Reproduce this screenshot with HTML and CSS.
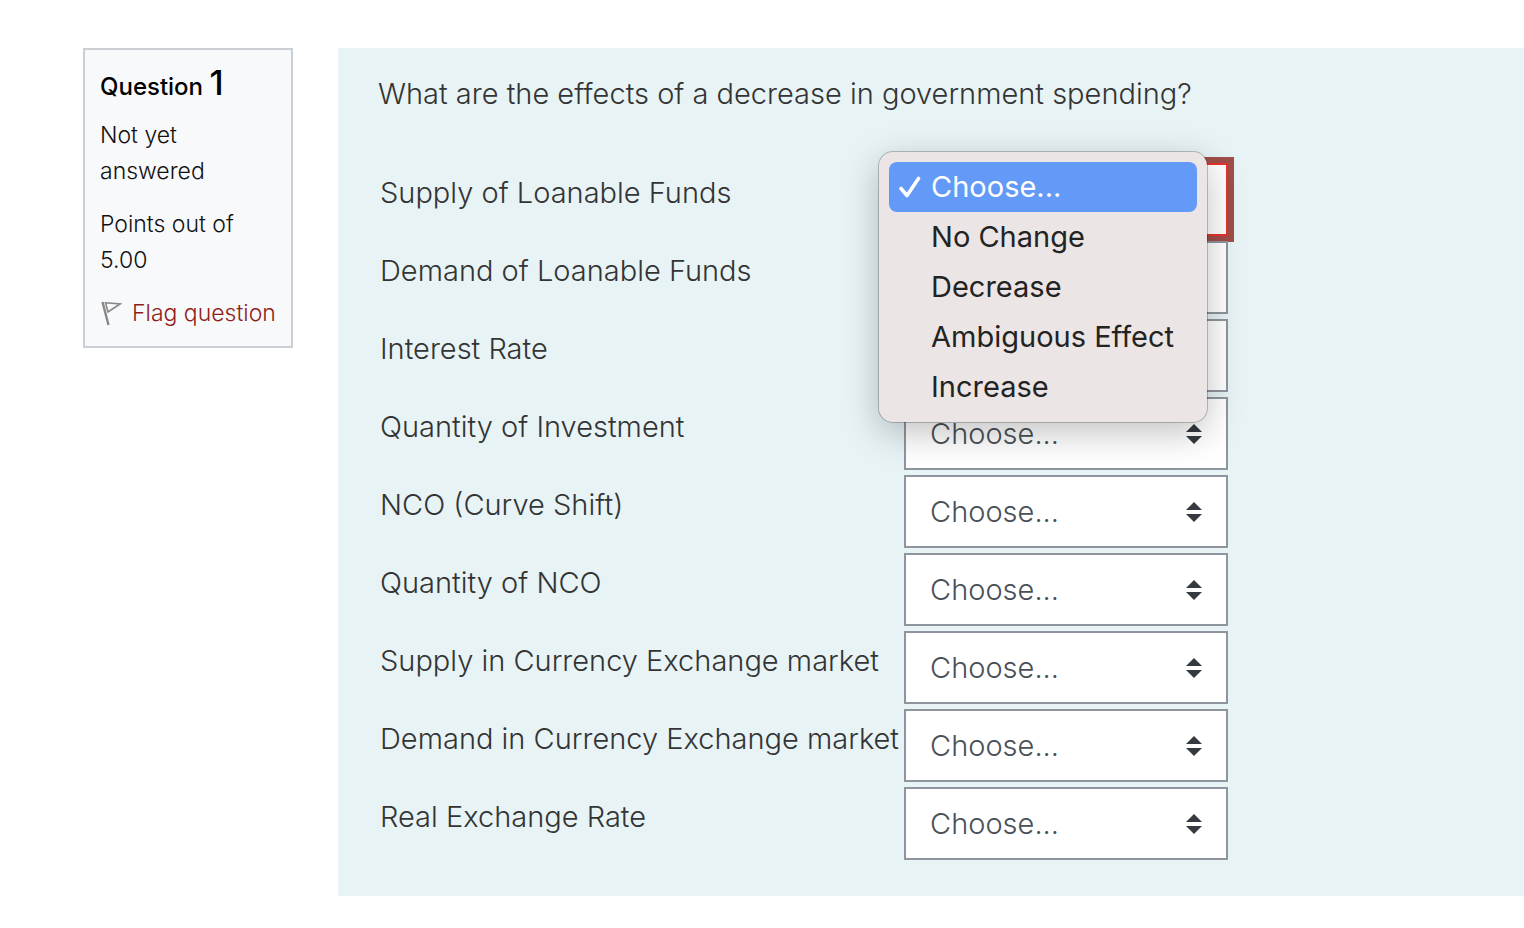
FILE: index.html
```html
<!DOCTYPE html>
<html lang="en">
<head>
    <meta charset="UTF-8">
    <meta name="viewport" content="width=device-width, initial-scale=1.0">
    <title>Question 1</title>
    <link rel="stylesheet" href="styles.css">
</head>
<body>
    <main class="question">
        <aside class="info">
            <h3 class="number">Question <span class="qno">1</span></h3>
            <div class="state">Not yet answered</div>
            <div class="grade">Points out of 5.00</div>
            <a class="flag" href="#">
                <svg width="22" height="26" viewBox="0 0 22 26" fill="none" stroke="#888">
                    <path d="M2.5 2L8.5 25" stroke-width="2.4"/>
                    <path d="M5.5 2.8L20 4L8 12Z" stroke-width="1.6"/>
                </svg>
                <span>Flag question</span>
            </a>
        </aside>

        <section class="content">
            <p class="qtext">What are the effects of a decrease in government spending?</p>

            <table class="answer">
                <tbody>
                    <tr>
                        <td class="text"><label for="sub0">Supply of Loanable Funds</label></td>
                        <td class="control">
                            <select id="sub0" class="select open"><option>Choose...</option></select>
                            <ul class="menu" role="listbox" aria-label="Supply of Loanable Funds">
                                <li class="item selected" role="option" aria-selected="true">
                                    <svg class="check" width="22" height="22" viewBox="0 0 22 22" fill="none" stroke="#fff" stroke-width="3.6" stroke-linecap="round" stroke-linejoin="round">
                                        <path d="M2 12.5L8 19.5L19.5 2.5"/>
                                    </svg>
                                    Choose...
                                </li>
                                <li class="item" role="option">No Change</li>
                                <li class="item" role="option">Decrease</li>
                                <li class="item" role="option">Ambiguous Effect</li>
                                <li class="item" role="option">Increase</li>
                            </ul>
                        </td>
                    </tr>
                    <tr>
                        <td class="text"><label for="sub1">Demand of Loanable Funds</label></td>
                        <td class="control"><select id="sub1" class="select"><option>Choose...</option></select></td>
                    </tr>
                    <tr>
                        <td class="text"><label for="sub2">Interest Rate</label></td>
                        <td class="control"><select id="sub2" class="select"><option>Choose...</option></select></td>
                    </tr>
                    <tr>
                        <td class="text"><label for="sub3">Quantity of Investment</label></td>
                        <td class="control"><select id="sub3" class="select"><option>Choose...</option></select></td>
                    </tr>
                    <tr>
                        <td class="text"><label for="sub4">NCO (Curve Shift)</label></td>
                        <td class="control"><select id="sub4" class="select"><option>Choose...</option></select></td>
                    </tr>
                    <tr>
                        <td class="text"><label for="sub5">Quantity of NCO</label></td>
                        <td class="control"><select id="sub5" class="select"><option>Choose...</option></select></td>
                    </tr>
                    <tr>
                        <td class="text"><label for="sub6">Supply in Currency Exchange market</label></td>
                        <td class="control"><select id="sub6" class="select"><option>Choose...</option></select></td>
                    </tr>
                    <tr>
                        <td class="text"><label for="sub7">Demand in Currency Exchange market</label></td>
                        <td class="control"><select id="sub7" class="select"><option>Choose...</option></select></td>
                    </tr>
                    <tr>
                        <td class="text"><label for="sub8">Real Exchange Rate</label></td>
                        <td class="control"><select id="sub8" class="select"><option>Choose...</option></select></td>
                    </tr>
                </tbody>
            </table>
        </section>
    </main>
</body>
</html>
```
FILE: styles.css
```css
* {
    box-sizing: border-box;
}

body {
    margin: 0;
    background-color: #fff;
    color: #343434;
    font-family: Inter, sans-serif;
    font-size: 29px;
    font-weight: 300;
    line-height: 45px;
}

.question {
    display: flex;
    align-items: flex-start;
    gap: 45px;
    padding: 48px 0 32px 83px;
}

/* Left info box */
.info {
    flex: 0 0 210px;
    padding: 15px;
    border: 2px solid #cacfd6;
    background-color: #f8f9fb;
    color: #111;
    font-size: 23px;
    line-height: 36px;
}

.number {
    margin: 0 0 12px;
    color: #000;
    font-size: 24px;
    font-weight: 500;
}

.qno {
    font-size: 34px;
}

.grade, .flag {
    margin-top: 17px;
}

.flag {
    display: flex;
    align-items: center;
    gap: 10px;
    color: #8f1d18;
    text-decoration: none;
    white-space: nowrap;
}

/* Question body */
.content {
    flex: 1;
    padding: 23px 40px 33px;
    background-color: #e7f3f5;
}

.qtext {
    margin: 0 0 45px;
}

.answer {
    border-collapse: collapse;
}

.answer td {
    padding: 2px 0 3px;
    vertical-align: top;
}

.answer .text {
    min-width: 526px;
    padding: 9px 5px 0 2px;
    white-space: nowrap;
}

.control {
    position: relative;
}

.select {
    display: block;
    width: 324px;
    height: 73px;
    padding: 0 50px 0 24px;
    border: 2px solid #8f959e;
    border-radius: 0;
    appearance: none;
    background: #fff url("data:image/svg+xml,%3Csvg xmlns='http://www.w3.org/2000/svg' width='16' height='20' viewBox='0 0 16 20'%3E%3Cpath fill='%23343a40' d='M8 0L16 8H0zM8 20L0 12h16z'/%3E%3C/svg%3E") no-repeat right 24px center;
    color: #495057;
    font: inherit;
}

.select.open {
    border-color: #e6322b;
    box-shadow: 0 0 0 6px #a04e49;
}

/* Opened list over the selects */
.menu {
    position: absolute;
    top: -9px;
    left: -25px;
    z-index: 1;
    width: 328px;
    margin: 0;
    padding: 10px;
    border-radius: 14px;
    background-color: #ebe5e5;
    box-shadow: 0 0 0 1px rgba(0, 0, 0, 0.22), 0 10px 36px rgba(0, 0, 0, 0.25);
    color: #232323;
    font-size: 29px;
    font-weight: 400;
    line-height: 50px;
    list-style: none;
}

.item {
    position: relative;
    padding-left: 42px;
    border-radius: 8px;
    white-space: nowrap;
}

.selected {
    background-color: #6399f7;
    color: #fff;
}

.check {
    position: absolute;
    top: 14px;
    left: 10px;
}
```
